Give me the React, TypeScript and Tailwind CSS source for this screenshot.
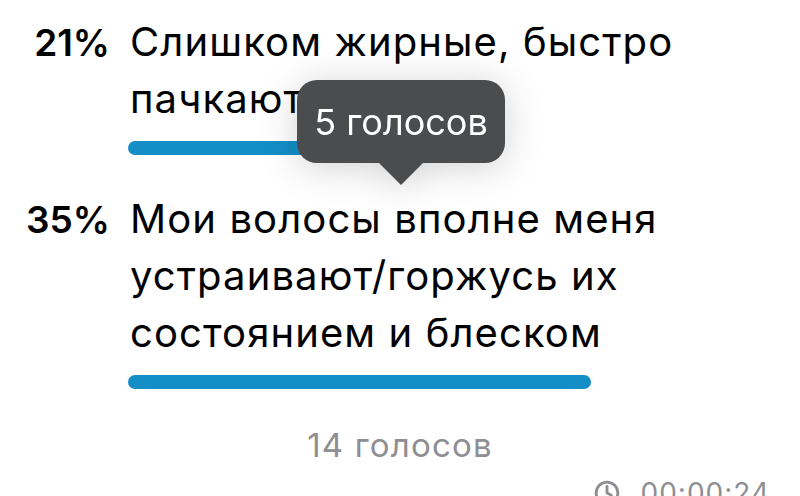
const options = [
  { pct: 21, lines: ["Слишком жирные, быстро", "пачкают"] },
  { pct: 35, lines: ["Мои волосы вполне меня", "устраивают/горжусь их", "состоянием и блеском"] },
];

const maxPct = 35;

function ClockIcon() {
  return (
    <svg className="w-[26px] h-[26px]" viewBox="0 0 24 24" fill="none" stroke="currentColor" strokeWidth="2.6">
      <circle cx="12" cy="12" r="10" />
      <path d="M12 6v6l4 2" strokeLinecap="round" />
    </svg>
  );
}

export default function App() {
  return (
    <div
      className="relative w-[800px] h-[496px] overflow-hidden bg-white text-black"
      style={{ fontFamily: 'Inter, "Liberation Sans", sans-serif' }}
    >
      <div className="flex flex-col pt-[13px]">
        {options.map((o, i) => (
          <div key={o.pct} className={i === 0 ? "" : "mt-[35px]"}>
            <div className="flex items-baseline">
              <div className="w-[110px] shrink-0 text-right text-[37px] font-semibold leading-[57px]">{o.pct}%</div>
              <div className="ml-[20px] text-[40px] leading-[57px] tracking-[1.1px]">
                {o.lines.map((l) => (
                  <div key={l}>{l}</div>
                ))}
              </div>
            </div>
            <div className="ml-[128px] mt-[14px] w-[463px]">
              <div
                className="h-[14px] rounded-full bg-[#138ec6]"
                style={{ width: `${(o.pct / maxPct) * 100}%` }}
              />
            </div>
          </div>
        ))}
        <div className="mt-[38px] text-center text-[33px] leading-[36px] tracking-[1.2px] text-[#8e8e93]">
          14 голосов
        </div>
        <div className="mt-[12px] mr-[30px] flex items-center justify-end gap-[20px] text-[#8e8e93] text-[28px] leading-[36px] tracking-[1px]">
          <ClockIcon />
          <span>00:00:24</span>
        </div>
      </div>

      <div className="absolute left-[297px] top-[80px] drop-shadow-[0_4px_18px_rgba(0,0,0,0.18)]">
        <div className="flex h-[83px] w-[208px] items-center justify-center rounded-[20px] bg-[#4b4c4e] text-[36px] text-white">
          5 голосов
        </div>
        <div className="mx-auto h-0 w-0 border-x-[22px] border-t-[22px] border-x-transparent border-t-[#4b4c4e]" />
      </div>
    </div>
  );
}
